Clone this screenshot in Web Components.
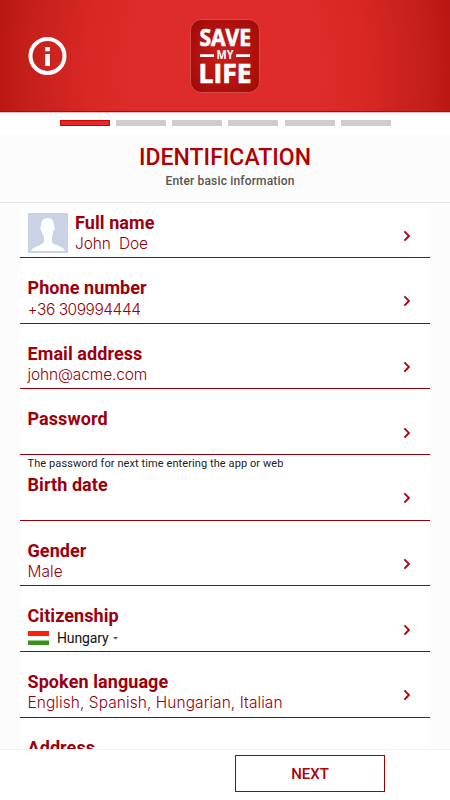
<!DOCTYPE html>
<html lang="en">
<head>
<meta charset="utf-8">
<title>Identification</title>
<style>
body{margin:0;width:450px;height:800px;overflow:hidden;background:#fcfcfc;font-family:Roboto,"Liberation Sans",sans-serif}
</style>
</head>
<body>
<app-screen></app-screen>
<script>
const define=(name,html)=>customElements.define(name,class extends HTMLElement{
  constructor(){
    super();
    const t=document.createElement('template');
    t.innerHTML=html;
    this.attachShadow({mode:'open'}).append(t.content.cloneNode(true));
  }
});

define('info-icon',`<style>:host{display:block;width:40px;height:40px}svg{display:block}</style>
<svg width="40" height="40" viewBox="0 0 40 40"><circle cx="19.5" cy="20" r="17" fill="none" stroke="#fff" stroke-width="4"/><path d="M17.2 11h4.7v4.2h-4.7zM17.2 18h4.7v12h-4.7z" fill="#fff"/></svg>`);

define('app-logo',`<style>:host{display:block;width:70px;height:74px}svg{display:block}text{font-family:"Open Sans","Noto Sans",sans-serif;font-weight:700;fill:#fff}</style>
<svg width="70" height="74" viewBox="0 0 70 74"><defs><radialGradient id="g" cx=".5" cy=".5" r=".65"><stop offset="0" stop-color="#cb1f1a"/><stop offset=".55" stop-color="#b41410"/><stop offset="1" stop-color="#9f0b07"/></radialGradient></defs>
<rect x=".5" y=".5" width="69" height="73" rx="11" fill="url(#g)" stroke="#d84b47"/>
<text x="9.5" y="26.6" font-size="23.5" textLength="51.5" lengthAdjust="spacingAndGlyphs" stroke="#fff" stroke-width=".7">SAVE</text>
<text x="26.5" y="40.4" font-size="12.3" textLength="17" lengthAdjust="spacingAndGlyphs">MY</text>
<path d="M10 35.2h14v2.8H10zM46 35.2h14v2.8H46z" fill="#fff"/>
<text x="8.6" y="63.6" font-size="27" textLength="53" lengthAdjust="spacingAndGlyphs" stroke="#fff" stroke-width=".7">LIFE</text></svg>`);

define('app-header',`<style>:host{display:grid;grid-template-columns:162px 70px 1fr;height:112px;box-sizing:border-box;padding-left:28px;border-bottom:1px solid #c80000;background:radial-gradient(ellipse 258px 340px at 225px 70px,#de2b2b 0,#de2b2b 36%,#d82725 55%,#c5201c 76%,#b4130f 94%)}
info-icon{margin-top:36px}app-logo{margin-top:19px}</style><info-icon></info-icon><app-logo></app-logo>`);

define('step-bar',`<style>:host{display:flex;justify-content:center;gap:6.3px;height:22px;box-sizing:border-box;padding:8px 0 0 .5px;background:linear-gradient(#eebcbc 1px,#fff 1px)}
i{width:50px;height:6px;background:#cdcdcd}i.on{box-sizing:border-box;background:#de2b2b;border:1px solid #d90000}</style>
<i class="on"></i><i></i><i></i><i></i><i></i><i></i>`);

define('page-title',`<style>:host{display:block;height:69px;box-sizing:border-box;padding-top:10px;text-align:center;border-bottom:1px solid #e6e6e6}
h1{margin:0;font:500 23px/28px Roboto,sans-serif;letter-spacing:.02px;color:#b00000}p{margin:1px 0 0 10px;font:500 12px/16px Roboto,sans-serif;letter-spacing:.16px;color:#555}</style>
<h1><slot name="heading"></slot></h1><p><slot></slot></p>`);

define('chevron-icon',`<style>:host{display:block;width:8px;height:12px}svg{display:block}</style>
<svg width="8" height="12" viewBox="0 0 8 12"><path d="M1.4 1.4 5.9 5.9 1.4 10.6" fill="none" stroke="#b0000a" stroke-width="1.9"/></svg>`);

define('field-row',`<style>:host{display:flex;height:65.67px;box-sizing:border-box;border-bottom:1px solid #96000a;padding:19px 0 0 7.5px;position:relative}
:host([first]){height:50px;padding-top:3.5px}
.b{flex:1;min-width:0}
.l{font:700 18px/21px Roboto,sans-serif;color:#9c000c;letter-spacing:.08px}
.v{display:flex;align-items:center;height:21px;margin-top:.5px;font:300 15.5px/21px Inter,"Liberation Sans",sans-serif;color:#96000c;white-space:pre;letter-spacing:var(--ls,-.15px)}
.n{position:absolute;left:7.5px;top:2.5px;font:400 11px/14px Roboto,sans-serif;letter-spacing:.09px;color:#222;white-space:nowrap}
chevron-icon{align-self:flex-end;margin:0 19.5px 15.3px 0}</style>
<div class="n"><slot name="note"></slot></div><slot name="lead"></slot><div class="b"><div class="l"><slot name="label"></slot></div><div class="v"><slot></slot></div></div><chevron-icon></chevron-icon>`);

define('user-avatar',`<style>:host{display:block;width:40px;height:40px;margin:1.5px 7.5px 0 0}svg{display:block}</style>
<svg width="40" height="40" viewBox="0 0 40 40"><path fill="#ccd2e6" d="M0 0h40v40H0z"/><path fill="#fff" d="M3 38c1-3 5-4 9-6 3-1.500 4-2 4-5v-4c-2-1-2-3-2-5-2 0-2-4-1-5 0-6 3-8 7-8s6 3 6 8c1 2 1 5-1 5 0 2 0 4-1 5v5c0 3 2 3 5 4 4 2 7 3 8 6z"/></svg>`);

define('country-select',`<style>:host{display:flex;align-items:center;height:20px;padding-top:2px;letter-spacing:-.12px;font:400 14px/18px Roboto,sans-serif;color:#111}
svg{display:block}.f{margin-right:8.5px}.a{margin-left:4px}</style>
<svg class="f" width="21" height="14" viewBox="0 0 21 14"><path fill="#fff" d="M0 0h21v14H0z"/><path fill="#ff1e0a" d="M0 0h21v5H0z"/><path fill="#38911a" d="M0 9.500h21V14H0z"/></svg><slot></slot><svg class="a" width="5" height="5" viewBox="0 0 5 5"><path d="M0 1h5L2.500 3.500z" fill="#555"/></svg>`);

define('field-list',`<style>:host{display:block;margin:5px 20px 0;background:#fff}</style><slot></slot>`);

define('bottom-bar',`<style>:host{display:flex;height:51px;box-sizing:border-box;border-top:1px solid #f1f1f1;background:#fff;padding:5px 65px 7px 235px;flex:none}
button{width:150px;height:37px;box-sizing:border-box;border:1px solid #a50000;border-radius:0;background:#fff;padding:0;color:#b00008;font:500 15px Roboto,sans-serif}</style>
<button><slot></slot></button>`);

define('app-screen',`<style>:host{display:flex;flex-direction:column;width:450px;height:800px;overflow:hidden}
main{flex:1;min-height:0;overflow:hidden}
.phone{--ls:-.46px}.wide{--ls:.06px}</style>
<app-header></app-header><step-bar></step-bar>
<main><page-title><span slot="heading">IDENTIFICATION</span>Enter basic information</page-title>
<field-list>
<field-row first><user-avatar slot="lead"></user-avatar><span slot="label">Full name</span>John  Doe</field-row>
<field-row class="phone"><span slot="label">Phone number</span>+36 309994444</field-row>
<field-row><span slot="label">Email address</span>john@acme.com</field-row>
<field-row><span slot="label">Password</span></field-row>
<field-row><span slot="note">The password for next time entering the app or web</span><span slot="label">Birth date</span></field-row>
<field-row class="wide"><span slot="label">Gender</span>Male</field-row>
<field-row><span slot="label">Citizenship</span><country-select>Hungary</country-select></field-row>
<field-row class="wide"><span slot="label">Spoken language</span>English, Spanish, Hungarian, Italian</field-row>
<field-row><span slot="label">Address</span></field-row>
</field-list></main>
<bottom-bar>NEXT</bottom-bar>`);
</script>
</body>
</html>
